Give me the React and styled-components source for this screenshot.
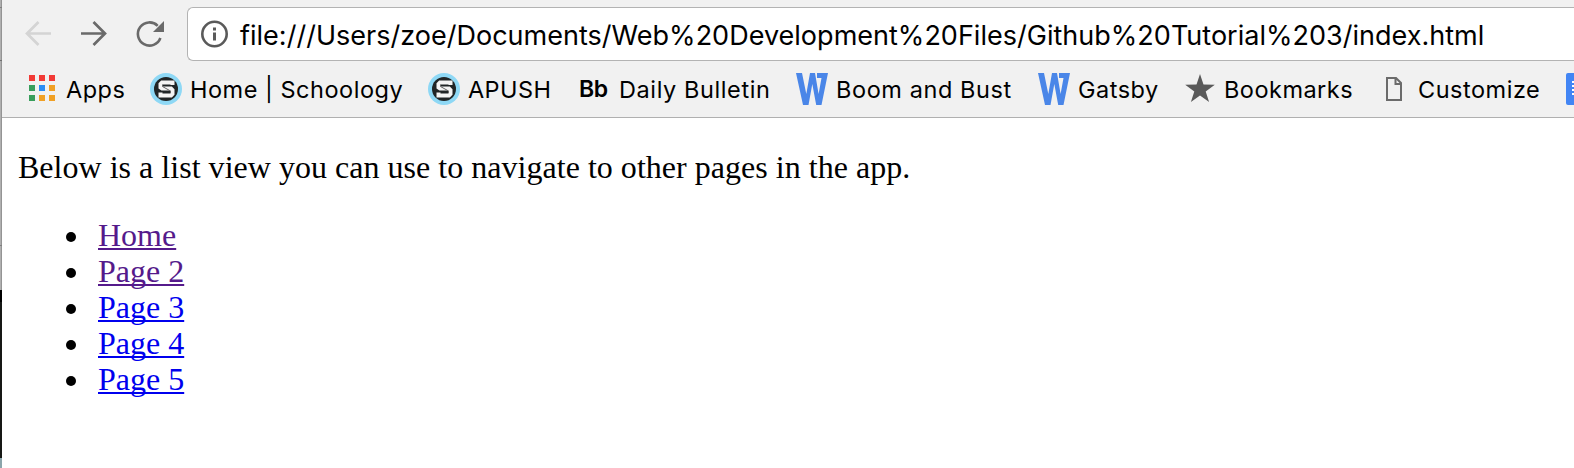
import React from "react";
import styled, { createGlobalStyle } from "styled-components";

const Global = createGlobalStyle`
  body { margin: 0; overflow: hidden; background: #fff; }
  * { box-sizing: border-box; }
`;
const Desktop = styled.div`
  display: flex;
  width: 1574px;
  height: 468px;
  overflow: hidden;
`;
const Edge = styled.div`
  flex: 0 0 2px;
  display: flex;
  flex-direction: column;
`;
const EdgePart = styled.div`
  height: ${(p) => p.$h}px;
  background: ${(p) => p.$bg};
`;
const Window = styled.div`
  flex: 1;
  min-width: 0;
  display: flex;
  flex-direction: column;
  background: #fff;
`;
const Chrome = styled.header`
  height: 118px;
  background: #f1f1f1;
  border-bottom: 1px solid #b0b0b0;
  font-family: Inter, sans-serif;
  color: #000;
`;
const Toolbar = styled.div`
  display: flex;
  align-items: center;
  height: 61px;
  padding-top: 7px;
  padding-left: 20px;
`;
const NavButton = styled.button`
  width: 32px;
  height: 32px;
  margin-right: 24px;
  padding: 0;
  border: 0;
  background: none;
  color: ${(p) => (p.disabled ? "#d4d4d4" : "#6a6a6a")};
  svg { display: block; }
`;
const Omnibox = styled.div`
  display: flex;
  align-items: center;
  flex: 1;
  height: 54px;
  margin-left: -3px;
  padding-left: 12px;
  background: #fff;
  border: 1px solid #b3b3b3;
  border-right: 0;
  border-radius: 6px 0 0 6px;
  svg { display: block; flex: none; }
`;
const Url = styled.span`
  margin-left: 10px;
  padding-top: 3px;
  font-size: 27px;
  line-height: 34px;
  letter-spacing: 0.015px;
  white-space: nowrap;
`;
const BookmarksBar = styled.nav`
  display: flex;
  align-items: center;
  height: 56px;
  padding-left: 24px;
  overflow: hidden;
`;
const Bookmark = styled.div`
  flex: none;
  display: flex;
  align-items: center;
  width: ${(p) => p.$w}px;
  svg { display: block; flex: none; }
`;
const Label = styled.span`
  margin-left: 8px;
  padding-top: 2px;
  font-size: 23.5px;
  line-height: 30px;
  letter-spacing: ${(p) => p.$ls || 0}px;
  white-space: nowrap;
`;
const Page = styled.main`
  padding: 31px 16px;
  font: 32px/36px "Liberation Serif", serif;
  color: #000;
`;
const Intro = styled.p`
  margin: 0 0 32px;
  letter-spacing: 0.025px;
`;
const PageList = styled.ul`
  margin: 0;
  padding: 0 0 0 47px;
  list-style: none;
`;
const PageItem = styled.li`
  display: flex;
  align-items: center;
  height: 36px;
  &::before {
    content: "";
    width: 10px;
    height: 10px;
    margin: 3px 22px 0 1px;
    border-radius: 50%;
    background: #000;
  }
`;
const PageLink = styled.a`
  color: ${(p) => (p.$visited ? "#551a8b" : "#0000ee")};
  text-decoration: underline;
  text-decoration-thickness: 2px;
  text-decoration-skip-ink: none;
  text-underline-offset: 2px;
`;

const Back = () => (
  <svg width="32" height="32" viewBox="0 0 32 32" fill="none" stroke="currentColor" strokeWidth="2.7">
    <path d="M29 15.5H5M16.5 4 5 15.5 16.5 27" />
  </svg>
);
const Forward = () => (
  <svg width="32" height="32" viewBox="0 0 32 32" fill="none" stroke="currentColor" strokeWidth="2.7">
    <path d="M3 15.5h24M15.5 4 27 15.5 15.5 27" />
  </svg>
);
const Reload = () => (
  <svg width="32" height="32" viewBox="0 0 32 32" fill="none">
    <path d="M26.400 20A11.600 11.600 0 1 1 23.700 7.800" stroke="currentColor" strokeWidth="2.600" />
    <path d="M30 3v11H19z" fill="currentColor" />
  </svg>
);
const Info = () => (
  <svg width="30" height="30" viewBox="0 0 30 30" fill="none">
    <circle cx="14.5" cy="15" r="12.2" stroke="#5a5a5a" strokeWidth="2.6" />
    <path d="M13 8.5h3v3h-3zM13 13.5h3v8h-3z" fill="#5a5a5a" />
  </svg>
);
const dots = ["#f23a36", "#f23a36", "#f23a36", "#389e5c", "#2a8df5", "#f0a025", "#389e5c", "#f0a025", "#f0a025"];
const Apps = () => (
  <svg width="32" height="32" viewBox="0 0 32 32">
    {dots.map((c, i) => (
      <rect key={i} x={3 + (i % 3) * 10} y={2 + Math.floor(i / 3) * 10} width="6" height="6" fill={c} />
    ))}
  </svg>
);
const Schoology = () => (
  <svg width="32" height="32" viewBox="0 0 32 32" fill="none">
    <circle cx="16" cy="16" r="16" fill="#8ed8f5" />
    <circle cx="16" cy="16" r="12" fill="#202526" />
    <path d="M22.500 12V9.500H12L10.500 11v3.500l1.500 1h9l1.500 1.500v4L21 22.500H10.500V19.500" stroke="#f4f4f4" strokeWidth="4" />
    <path d="M12.500 11.500v2l8 4.500v2" stroke="#666" strokeWidth="1" />
  </svg>
);
const Blackboard = styled.span`
  width: 32px;
  font-size: 23px;
  line-height: 30px;
  font-weight: 600;
  letter-spacing: -0.4px;
`;
const Wiki = () => (
  <svg width="32" height="32" viewBox="0 0 32 32" fill="#4a86e8">
    <path d="M0 0h6l4.300 21L14 0h5l3.600 21L25.500 5H21V0h11l-6.500 32h-5.300L16.300 11 12.500 32H7z" />
  </svg>
);
const Star = () => (
  <svg width="32" height="32" viewBox="0 0 32 32" fill="#5a5a5a">
    <path d="m16 1 3.500 10.600 11.300.1-9.100 6.700 3.400 10.700L16 22.600l-9.100 6.500 3.400-10.700-9.100-6.700 11.300-.1z" />
  </svg>
);
const File = () => (
  <svg width="32" height="32" viewBox="0 0 32 32" fill="none" stroke="#6b6b6b" strokeWidth="2">
    <path d="M9 5h9l5 5v17H9zM17.500 5v6H23" />
  </svg>
);
const Doc = () => (
  <svg width="32" height="32" viewBox="0 0 32 32">
    <rect width="32" height="32" rx="2" fill="#4285f4" />
    <path d="M6 9h20M6 13h20M6 17h20M6 21h14" stroke="#fff" strokeWidth="2" />
  </svg>
);

const bookmarks = [
  { icon: <Apps />, text: "Apps", w: 124, ls: 0.5 },
  { icon: <Schoology />, text: "Home | Schoology", w: 278, ls: 0.52 },
  { icon: <Schoology />, text: "APUSH", w: 151, ls: 0.4 },
  { icon: <Blackboard>Bb</Blackboard>, text: "Daily Bulletin", w: 217, ls: 0.6 },
  { icon: <Wiki />, text: "Boom and Bust", w: 242, ls: 0.58 },
  { icon: <Wiki />, text: "Gatsby", w: 146, ls: 0.5 },
  { icon: <Star />, text: "Bookmarks", w: 194, ls: 0.48 },
  { icon: <File />, text: "Customize", w: 188, ls: 0.52 },
  { icon: <Doc />, text: "", w: 32 },
];
const pages = [
  { name: "Home", visited: true },
  { name: "Page 2", visited: true },
  { name: "Page 3" },
  { name: "Page 4" },
  { name: "Page 5" },
];

const shade = "linear-gradient(90deg, #b0b0b0 50%, #949494 50%)";
const edge = [
  [7, shade],
  [1, "#808080"],
  [52, shade],
  [1, "#707070"],
  [184, shade],
  [1, "#808080"],
  [44, shade],
  [12, "#000"],
  [156, "#161815"],
  [10, "#8ba5ab"],
];

export default function App() {
  return (
    <Desktop>
      <Global />
      <Edge>
        {edge.map(([h, bg], i) => (
          <EdgePart key={i} $h={h} $bg={bg} />
        ))}
      </Edge>
      <Window>
        <Chrome>
          <Toolbar>
            <NavButton disabled aria-label="Back"><Back /></NavButton>
            <NavButton aria-label="Forward"><Forward /></NavButton>
            <NavButton aria-label="Reload"><Reload /></NavButton>
            <Omnibox>
              <Info />
              <Url>file:///Users/zoe/Documents/Web%20Development%20Files/Github%20Tutorial%203/index.html</Url>
            </Omnibox>
          </Toolbar>
          <BookmarksBar>
            {bookmarks.map((b, i) => (
              <Bookmark key={i} $w={b.w}>
                {b.icon}
                {b.text && <Label $ls={b.ls}>{b.text}</Label>}
              </Bookmark>
            ))}
          </BookmarksBar>
        </Chrome>
        <Page>
          <Intro>Below is a list view you can use to navigate to other pages in the app.</Intro>
          <PageList>
            {pages.map((p) => (
              <PageItem key={p.name}>
                <PageLink href="#" $visited={p.visited}>{p.name}</PageLink>
              </PageItem>
            ))}
          </PageList>
        </Page>
      </Window>
    </Desktop>
  );
}
